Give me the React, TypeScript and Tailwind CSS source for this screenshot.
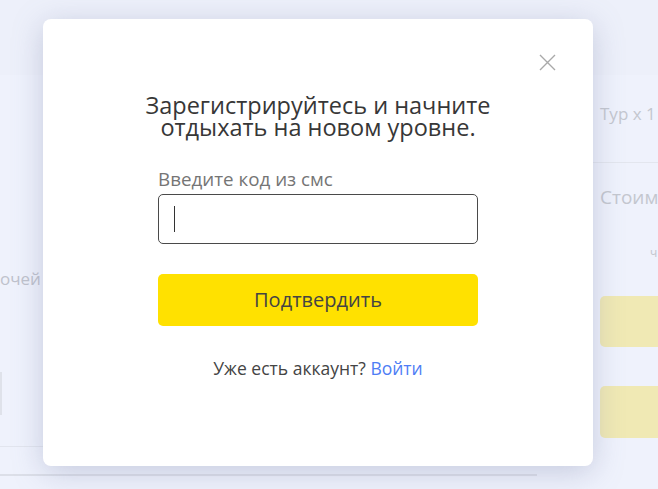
import { useState } from "react";

export default function App() {
  const [code, setCode] = useState("");

  return (
    <div className="relative w-[658px] h-[489px] overflow-hidden bg-[#eff2fc] font-['Open_Sans',sans-serif]">
      {/* page behind the overlay */}
      <div className="h-[75px] bg-[#edf0fa]" />
      <div className="flex h-[414px]">
        <div className="w-[593px] shrink-0 flex flex-col">
          <div className="h-[193px]" />
          <div className="text-[17px] leading-[22px] text-[#bfc2cc] whitespace-nowrap">очей</div>
          <div className="h-[82px]" />
          <div className="w-[2px] h-[43px] bg-[#dfe2ea]" />
          <div className="h-[32px] border-b border-[#e2e5ee]" />
          <div className="h-[29px] w-[537px] border-b-2 border-[#dcdfe8]" />
        </div>
        <div className="flex-1 min-w-0 overflow-hidden pl-[7px] flex flex-col">
          <div className="pt-[28px] text-[17px] leading-[22px] text-[#c4c7cf] whitespace-nowrap">Тур х 1</div>
          <div className="-ml-[7px] mt-[37px] border-t border-[#e3e6ee]" />
          <div className="mt-[22px] text-[19px] leading-[24px] text-[#c4c7cf] whitespace-nowrap">Стоим</div>
          <div className="mt-[37px] pl-[50px] text-[12px] leading-[14px] text-[#c4c7cf]">ч</div>
          <div className="mt-[36px] h-[51px] w-[80px] rounded-[5px] bg-[#f0e9b4]" />
          <div className="mt-[39px] h-[52px] w-[80px] rounded-[5px] bg-[#f0e9b4]" />
        </div>
      </div>

      {/* modal */}
      <div className="absolute left-[43px] top-[19px] w-[550px] h-[447px] rounded-[8px] bg-white shadow-[0_6px_30px_rgba(120,130,170,0.35)] flex flex-col items-center">
        <button className="absolute right-[37px] top-[35px] w-[17px] h-[17px] text-[#a9a9a9]">
          <svg viewBox="0 0 17 17" width="17" height="17" fill="none" stroke="currentColor" strokeWidth="1.4">
            <path d="M1 1L16 16M16 1L1 16" />
          </svg>
        </button>

        <h2 className="mt-[75px] text-center text-[23.5px] leading-[22px] font-medium text-[#373737] whitespace-nowrap">
          Зарегистрируйтесь и начните
          <br />
          отдыхать на новом уровне.
        </h2>

        <div className="mt-[30px] w-[320px] flex flex-col">
          <label className="text-[18.8px] leading-[22px] text-[#757575]">Введите код из смс</label>
          <div className="mt-[4px] h-[50px] rounded-[5px] border border-[#4a4a4a] flex items-center px-[15px]">
            <input
              value={code}
              onChange={(e) => setCode(e.target.value)}
              className="w-full h-[26px] outline-none text-[18px] text-[#333] border-l border-[#333] pl-[1px]"
            />
          </div>
          <button className="mt-[30px] h-[52px] rounded-[5px] bg-[#ffe100] text-[20px] text-[#444]">
            Подтвердить
          </button>
          <div className="mt-[31px] text-center text-[17.5px] leading-[22px] text-[#444]">
            Уже есть аккаунт? <a className="text-[#4e7df5]">Войти</a>
          </div>
        </div>
      </div>
    </div>
  );
}
